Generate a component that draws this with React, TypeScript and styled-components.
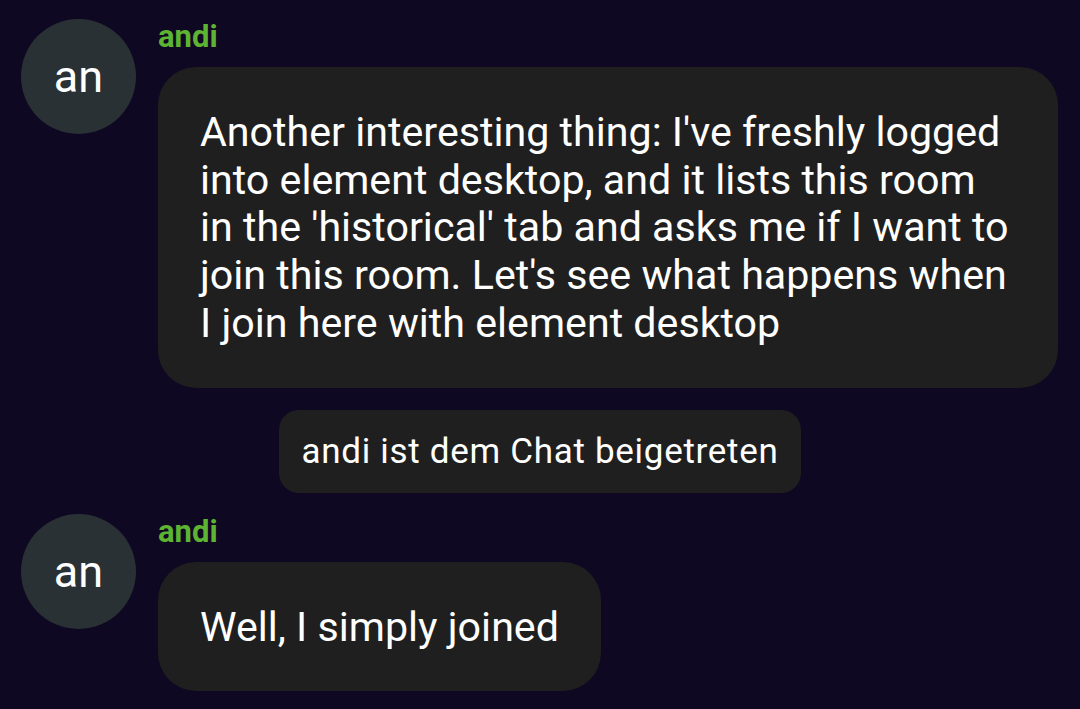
import React from "react";
import styled, { createGlobalStyle } from "styled-components";

const Global = createGlobalStyle`
  html, body { margin: 0; padding: 0; background: #0f0822; }
  body { font-family: Roboto, "Noto Sans", sans-serif; color: #ffffff; }
`;

const Page = styled.div`
  width: 1080px;
  height: 709px;
  overflow: hidden;
  background: #0f0822;
  display: flex;
  flex-direction: column;
  padding-top: 19px;
  box-sizing: border-box;
`;

const MessageRow = styled.div`
  display: flex;
  align-items: flex-start;
  gap: 22px;
  padding: 0 22px 0 21px;
`;

const Avatar = styled.div`
  flex: 0 0 115px;
  width: 115px;
  height: 115px;
  border-radius: 50%;
  background: #293135;
  display: flex;
  align-items: center;
  justify-content: center;
  font-size: 45px;
  line-height: 1;
`;

const Column = styled.div`
  flex: 1;
  min-width: 0;
  display: flex;
  flex-direction: column;
  align-items: flex-start;
`;

const Name = styled.div`
  color: #5db332;
  font-weight: 700;
  font-size: 31px;
  line-height: 36px;
  margin-bottom: 12px;
`;

const Bubble = styled.div`
  background: #1f1f1f;
  border-radius: 38px;
  padding: 42px 42px 40px 42px;
  font-size: 41.2px;
  line-height: 47.7px;
  box-sizing: border-box;
  max-width: 100%;
`;

const SystemRow = styled.div`
  display: flex;
  justify-content: center;
  margin: 22px 0 21px;
`;

const SystemBubble = styled.div`
  background: #1f1f1f;
  border-radius: 20px;
  padding: 22px 22px 21px;
  font-size: 35px;
  letter-spacing: 0.7px;
  line-height: 40px;
`;

export default function App() {
  return (
    <>
      <Global />
      <Page>
        <MessageRow>
          <Avatar>an</Avatar>
          <Column>
            <Name>andi</Name>
            <Bubble>
              Another interesting thing: I've freshly logged into element desktop, and it lists this room in the 'historical' tab and asks me if I want to join this room. Let's see what happens when I join here with element desktop
            </Bubble>
          </Column>
        </MessageRow>
        <SystemRow>
          <SystemBubble>andi ist dem Chat beigetreten</SystemBubble>
        </SystemRow>
        <MessageRow>
          <Avatar>an</Avatar>
          <Column>
            <Name>andi</Name>
            <Bubble>Well, I simply joined</Bubble>
          </Column>
        </MessageRow>
      </Page>
    </>
  );
}
